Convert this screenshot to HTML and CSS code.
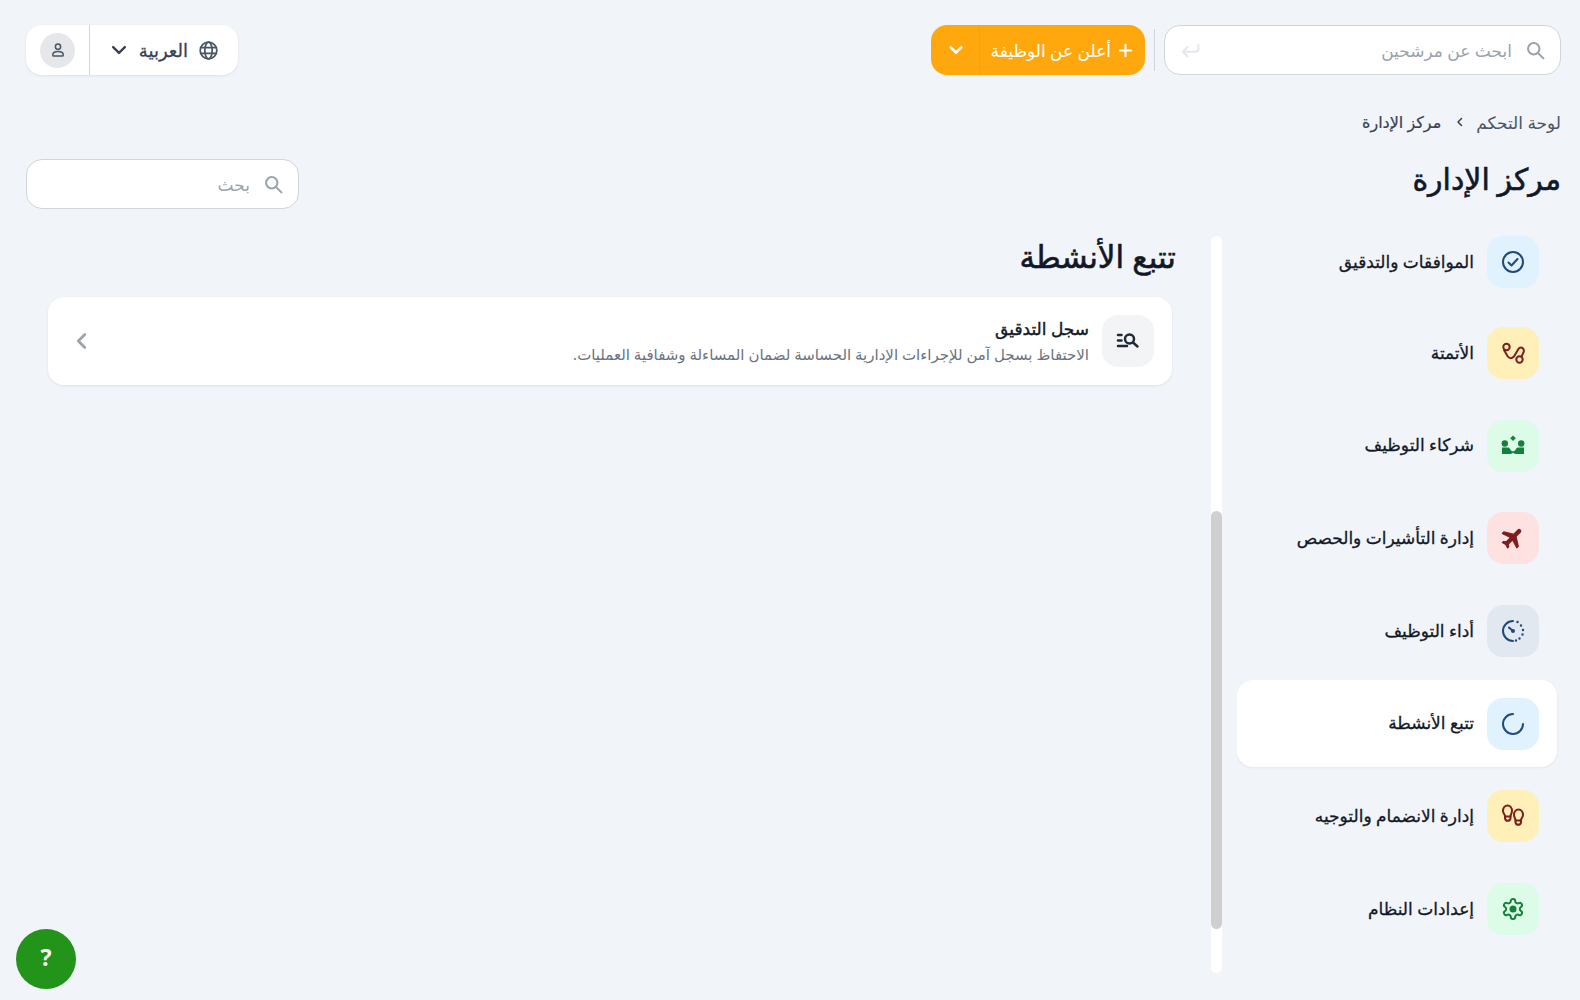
FILE: index.html
```html
<!DOCTYPE html>
<html lang="ar" dir="rtl">
<head>
    <meta charset="UTF-8">
    <title>مركز الإدارة</title>
    <link rel="stylesheet" href="styles.css">
</head>
<body>
    <header class="topbar">
        <div class="top-actions">
            <div class="search-box top-search">
                <svg class="search-icon" viewBox="0 0 24 24"><circle cx="10" cy="10" r="6.5"/><path d="M15 15l6 6"/></svg>
                <span class="placeholder">ابحث عن مرشحين</span>
                <svg class="return-icon" viewBox="0 0 24 24"><path d="M22 6v5a3 3 0 0 1-3 3H4"/><path d="M9 8.5L3.5 14 9 19.5"/></svg>
            </div>
            <span class="top-divider"></span>
            <div class="post-btn">
                <span class="post-main">
                    <svg class="plus-icon" viewBox="0 0 24 24"><path d="M12 4v16M4 12h16"/></svg>
                    أعلن عن الوظيفة
                </span>
                <span class="post-arrow">
                    <svg class="chev-icon" viewBox="0 0 24 24"><path d="M5 8.5l7 7 7-7"/></svg>
                </span>
            </div>
        </div>
        <div class="user-box">
            <div class="lang">
                <svg class="globe-icon" viewBox="0 0 24 24"><circle cx="12" cy="12" r="9.5"/><ellipse cx="12" cy="12" rx="4.2" ry="9.5"/><path d="M3 8.8h18M3 15.2h18"/></svg>
                <span>العربية</span>
                <svg class="lang-chev" viewBox="0 0 24 24"><path d="M5 8.5l7 7 7-7"/></svg>
            </div>
            <div class="avatar-wrap">
                <span class="avatar">
                    <svg viewBox="0 0 24 24"><circle cx="12" cy="7.5" r="3.5"/><path d="M5 18.5c0-3 2.500-4.500 7-4.500s7 1.500 7 4.500c0 1-.5 1.500-1.500 1.500h-11c-1 0-1.500-.5-1.500-1.500z"/></svg>
                </span>
            </div>
        </div>
    </header>

    <nav class="breadcrumb">
        <span>لوحة التحكم</span>
        <svg viewBox="0 0 24 24"><path d="M9 5l7 7-7 7"/></svg>
        <span class="crumb-current">مركز الإدارة</span>
    </nav>

    <div class="title-row">
        <h1>مركز الإدارة</h1>
        <div class="search-box page-search">
            <svg class="search-icon" viewBox="0 0 24 24"><circle cx="10" cy="10" r="6.5"/><path d="M15 15l6 6"/></svg>
            <span class="placeholder">بحث</span>
        </div>
    </div>

    <div class="columns">
        <div class="side-list">
            <div class="side-inner">
                <a class="side-item">
                    <span class="side-icon blue"><svg viewBox="0 0 24 24"><circle cx="12" cy="12" r="10"/><path d="M7.500 12.500l3 3 6-6.500"/></svg></span>
                    <span class="side-label">الموافقات والتدقيق</span>
                </a>
                <a class="side-item">
                    <span class="side-icon yellow"><svg viewBox="0 0 24 24"><circle cx="5.500" cy="6" r="3.200"/><circle cx="18.500" cy="18.500" r="3.200"/><path d="M3 9L6.500 15Q9 19 13 15.500L16.500 9.500Q18.500 5.500 21.500 7 24 9 22 12.500L20.500 15.700"/></svg></span>
                    <span class="side-label">الأتمتة</span>
                </a>
                <a class="side-item">
                    <span class="side-icon green"><svg class="solid" viewBox="0 0 24 24"><path d="M12 1.500l2.800 2.800-2.800 2.800-2.800-2.800z"/><circle cx="3.800" cy="9.500" r="3.200"/><circle cx="20.200" cy="9.500" r="3.200"/><path d="M1 13.500h5.500c1.500 0 2 .5 2.800 2 .8 1.300 1.700 1.800 2.700 1.800s1.900-.5 2.700-1.800c.8-1.500 1.300-2 2.800-2H23V20H14.500c-1 0-1.500-.5-2.500-1.200-1 .7-1.500 1.200-2.500 1.200H1z"/></svg></span>
                    <span class="side-label">شركاء التوظيف</span>
                </a>
                <a class="side-item">
                    <span class="side-icon red"><svg class="solid plane" viewBox="0 0 24 24"><path d="M21 16v-2l-8-5V3.500c0-.83-.67-1.500-1.500-1.500S10 2.670 10 3.500V9l-8 5v2l8-2.500V19l-2 1.500V22l3.500-1 3.500 1v-1.500L13 19v-5.500l8 2.500z"/></svg></span>
                    <span class="side-label">إدارة التأشيرات والحصص</span>
                </a>
                <a class="side-item">
                    <span class="side-icon slate"><svg viewBox="0 0 24 24"><path d="M12 2a10 10 0 0 0 0 20"/><path class="dots" d="M16.500 3v0M20 6.500v0M22 11v0M21.500 15.500v0M18.500 19.500v0M15 21.500v0"/><path d="M8 8.500l4 3.500"/><circle class="dot" cx="12" cy="12" r="2"/></svg></span>
                    <span class="side-label">أداء التوظيف</span>
                </a>
                <a class="side-item active">
                    <span class="side-icon blue"><svg viewBox="0 0 24 24"><path d="M12 2a10 10 0 1 0 10 10"/></svg></span>
                    <span class="side-label">تتبع الأنشطة</span>
                </a>
                <a class="side-item">
                    <span class="side-icon yellow"><svg viewBox="0 0 24 24"><path d="M2 7c0-3 1.800-5.500 4.500-5.500S11 4 11 7c0 2-1.200 3-1.500 5v2.500a2.800 2.800 0 0 1-5.500 0V12C3.500 10 2 9 2 7z"/><path d="M22 11c0-3-1.800-5.500-4.500-5.500S13 8 13 11c0 2 1.200 3 1.500 5v2.500a2.800 2.800 0 0 0 5.500 0V16c.5-2 2-3 2-5z"/><path d="M4 12.500h5.500M14.500 16.500H20"/></svg></span>
                    <span class="side-label">إدارة الانضمام والتوجيه</span>
                </a>
                <a class="side-item">
                    <span class="side-icon green"><svg viewBox="0 0 24 24"><path d="M12.220 2h-.44a2 2 0 0 0-2 2v.18a2 2 0 0 1-1 1.730l-.43.25a2 2 0 0 1-2 0l-.15-.08a2 2 0 0 0-2.730.73l-.22.38a2 2 0 0 0 .73 2.730l.15.1a2 2 0 0 1 1 1.720v.51a2 2 0 0 1-1 1.740l-.15.09a2 2 0 0 0-.73 2.730l.22.38a2 2 0 0 0 2.730.73l.15-.08a2 2 0 0 1 2 0l.43.25a2 2 0 0 1 1 1.730V20a2 2 0 0 0 2 2h.44a2 2 0 0 0 2-2v-.18a2 2 0 0 1 1-1.730l.43-.25a2 2 0 0 1 2 0l.15.08a2 2 0 0 0 2.730-.73l.22-.39a2 2 0 0 0-.73-2.730l-.15-.08a2 2 0 0 1-1-1.740v-.5a2 2 0 0 1 1-1.740l.15-.09a2 2 0 0 0 .73-2.730l-.22-.38a2 2 0 0 0-2.730-.73l-.15.08a2 2 0 0 1-2 0l-.43-.25a2 2 0 0 1-1-1.730V4a2 2 0 0 0-2-2z"/><circle class="dot" cx="12" cy="12" r="3.500"/></svg></span>
                    <span class="side-label">إعدادات النظام</span>
                </a>
            </div>
        </div>

        <div class="scroll-track"><div class="scroll-thumb"></div></div>

        <main class="panel">
            <h2>تتبع الأنشطة</h2>
            <div class="card">
                <span class="card-icon"><svg viewBox="0 0 24 24"><path d="M2 6h3.500M2 11.500h3.500M2 17h9"/><circle cx="13.500" cy="10" r="4.500"/><path d="M17 13.500l4.500 4"/></svg></span>
                <div class="card-text">
                    <div class="card-title">سجل التدقيق</div>
                    <div class="card-desc">الاحتفاظ بسجل آمن للإجراءات الإدارية الحساسة لضمان المساءلة وشفافية العمليات.</div>
                </div>
                <svg class="card-chev" viewBox="0 0 24 24"><path d="M15 5l-7 7 7 7"/></svg>
            </div>
        </main>
    </div>

    <button class="help-btn">?</button>
</body>
</html>
```

FILE: styles.css
```css
* {
    box-sizing: border-box;
}
body {
    margin: 0;
    width: 1580px;
    height: 1000px;
    overflow: hidden;
    position: relative;
    background: #f1f4f9;
    font-family: 'Noto Sans', 'Open Sans', 'DejaVu Sans', sans-serif;
    color: #111827;
    padding: 25px 19px 0 26px;
}
svg {
    display: block;
    fill: none;
    stroke: currentColor;
    stroke-width: 2;
    stroke-linecap: round;
    stroke-linejoin: round;
}

/* top bar */
.topbar {
    display: flex;
    justify-content: space-between;
}
.top-actions {
    display: flex;
    align-items: center;
}
.search-box {
    display: flex;
    align-items: center;
    height: 50px;
    background: #fff;
    border: 1px solid #d1d5db;
    border-radius: 16px;
    padding: 0 14px;
}
.top-search {
    width: 397px;
}
.search-icon {
    width: 21px;
    height: 21px;
    color: #9ca3af;
    stroke-width: 2.400;
    flex-shrink: 0;
}
.placeholder {
    color: #9ca3af;
    font-size: 17px;
    margin-right: 13px;
}
.return-icon {
    width: 20px;
    height: 20px;
    margin-right: auto;
    margin-left: 1px;
    color: #e5e7eb;
    stroke-width: 2.500;
}
.top-divider {
    width: 1px;
    height: 42px;
    background: #d1d5db;
    margin: 0 9px;
}
.post-btn {
    display: flex;
    height: 50px;
    width: 214px;
    background: #ffa80d;
    border-radius: 16px;
    color: #fff;
    font-size: 17px;
}
.post-main {
    display: flex;
    align-items: center;
    gap: 6px;
    flex: 1;
    padding-right: 11px;
    white-space: nowrap;
    border-left: 1px solid #f7a10b;
}
.plus-icon {
    width: 17px;
    height: 17px;
    stroke-width: 3;
}
.post-arrow {
    display: flex;
    align-items: center;
    justify-content: center;
    width: 48px;
    padding-left: 1px;
}
.chev-icon {
    width: 18px;
    height: 18px;
    stroke-width: 3.600;
}
.user-box {
    display: flex;
    height: 50px;
    width: 212px;
    background: #fff;
    border-radius: 16px;
    box-shadow: 0 1px 3px rgba(0, 0, 0, 0.08);
}
.lang {
    display: flex;
    align-items: center;
    flex: 1;
    padding-right: 19px;
    gap: 10px;
    color: #374151;
    font-size: 18px;
    -webkit-text-stroke: 0.3px #374151;
    border-left: 1px solid #d1d5db;
}
.globe-icon {
    width: 21px;
    height: 21px;
    color: #4b5563;
}
.lang-chev {
    width: 20px;
    height: 20px;
    color: #374151;
    stroke-width: 2.800;
}
.avatar-wrap {
    display: flex;
    align-items: center;
    justify-content: center;
    width: 63px;
}
.avatar {
    display: flex;
    align-items: center;
    justify-content: center;
    width: 35px;
    height: 35px;
    border-radius: 50%;
    background: #e5e7eb;
    color: #4b5563;
}
.avatar svg {
    width: 18px;
    height: 18px;
}

/* breadcrumb + title */
.breadcrumb {
    display: flex;
    align-items: center;
    gap: 10px;
    margin-top: 33px;
    height: 28px;
    font-size: 17px;
    color: #4b5563;
}
.breadcrumb svg {
    width: 12px;
    height: 12px;
    color: #374151;
    stroke-width: 3;
    transform: scaleX(-1);
}
.crumb-current {
    color: #374151;
    font-size: 16px;
    margin-right: 3px;
    -webkit-text-stroke: 0.2px #374151;
}
.title-row {
    display: flex;
    justify-content: space-between;
    align-items: center;
    margin-top: 23px;
    height: 50px;
}
h1 {
    margin: -11px 0 0;
    font-size: 30px;
    font-weight: 400;
    -webkit-text-stroke: 0.6px #111827;
    color: #111827;
}
.page-search {
    width: 273px;
}

/* sidebar list */
.columns {
    display: flex;
    margin-top: 27px;
    height: 737px;
}
.side-list {
    width: 324px;
    padding-right: 4px;
    height: 737px;
    overflow: hidden;
    flex-shrink: 0;
}
.side-inner {
    display: flex;
    flex-direction: column;
    gap: 6px;
    margin-top: -17px;
}
.side-item {
    display: flex;
    align-items: center;
    gap: 13px;
    height: 86.700px;
    padding: 0 18px;
    font-size: 17px;
    -webkit-text-stroke: 0.3px #111827;
    color: #111827;
    border-radius: 16px;
}
.side-item:first-child {
    margin-bottom: -2px;
}
.side-label {
    padding-bottom: 2px;
}
.side-item.active {
    background: #fff;
    box-shadow: 0 1px 3px rgba(0, 0, 0, 0.06);
}
.side-icon {
    display: flex;
    align-items: center;
    justify-content: center;
    width: 52px;
    height: 52px;
    border-radius: 16px;
    flex-shrink: 0;
    -webkit-text-stroke: 0;
}
.side-icon svg {
    width: 24px;
    height: 24px;
}
.blue {
    background: #e0f2fe;
    color: #1e4a7c;
}
.yellow {
    background: #fef0b8;
    color: #7f1d1d;
}
.green {
    background: #dcfce7;
    color: #15803d;
}
.red {
    background: #fee2e2;
    color: #7f1d1d;
}
.slate {
    background: #e2e8f0;
    color: #1e4a7c;
}
.side-icon .solid {
    fill: currentColor;
    stroke: none;
}
.side-icon .plane {
    width: 26px;
    height: 26px;
    stroke: currentColor;
    stroke-width: 1;
    transform: rotate(45deg);
}
.side-icon .dot {
    fill: currentColor;
    stroke: none;
}
.side-icon .dots {
    stroke-width: 2.400;
}

/* fake scrollbar, the list behind it is scrolled */
.scroll-track {
    width: 11px;
    margin-right: 15px;
    padding-top: 275px;
    background: #fff;
    border-radius: 6px;
    flex-shrink: 0;
}
.scroll-thumb {
    height: 418px;
    background: #cfcfcf;
    border-radius: 6px;
}

/* right content */
.panel {
    flex: 1;
    padding: 0 39px 0 22px;
}
h2 {
    margin: -1px -4px 0 0;
    font-size: 31px;
    font-weight: 400;
    -webkit-text-stroke: 0.6px #111827;
    color: #111827;
    line-height: 42px;
}
.card {
    display: flex;
    align-items: center;
    height: 88px;
    margin-top: 20px;
    padding: 0 18px;
    gap: 13px;
    background: #fff;
    border-radius: 16px;
    box-shadow: 0 1px 3px rgba(0, 0, 0, 0.08);
}
.card-icon {
    display: flex;
    align-items: center;
    justify-content: center;
    width: 52px;
    height: 52px;
    border-radius: 16px;
    background: #f3f4f6;
    color: #1f2937;
    flex-shrink: 0;
}
.card-icon svg {
    width: 24px;
    height: 24px;
    stroke-width: 2.500;
}
.card-title {
    font-size: 17px;
    line-height: 24px;
    -webkit-text-stroke: 0.4px #111827;
    color: #111827;
}
.card-desc {
    font-size: 15px;
    line-height: 22px;
    margin-top: 2px;
    color: #6b7280;
}
.card-chev {
    width: 22px;
    height: 22px;
    margin-right: auto;
    margin-left: 5px;
    color: #9ca3af;
    stroke-width: 3;
}

/* help */
.help-btn {
    position: absolute;
    left: 16px;
    top: 929px;
    width: 60px;
    height: 60px;
    padding: 0 0 4px;
    border: none;
    border-radius: 50%;
    background: #22941a;
    color: #fff;
    font-family: 'Noto Sans', sans-serif;
    font-size: 23px;
    font-weight: 700;
}
```
